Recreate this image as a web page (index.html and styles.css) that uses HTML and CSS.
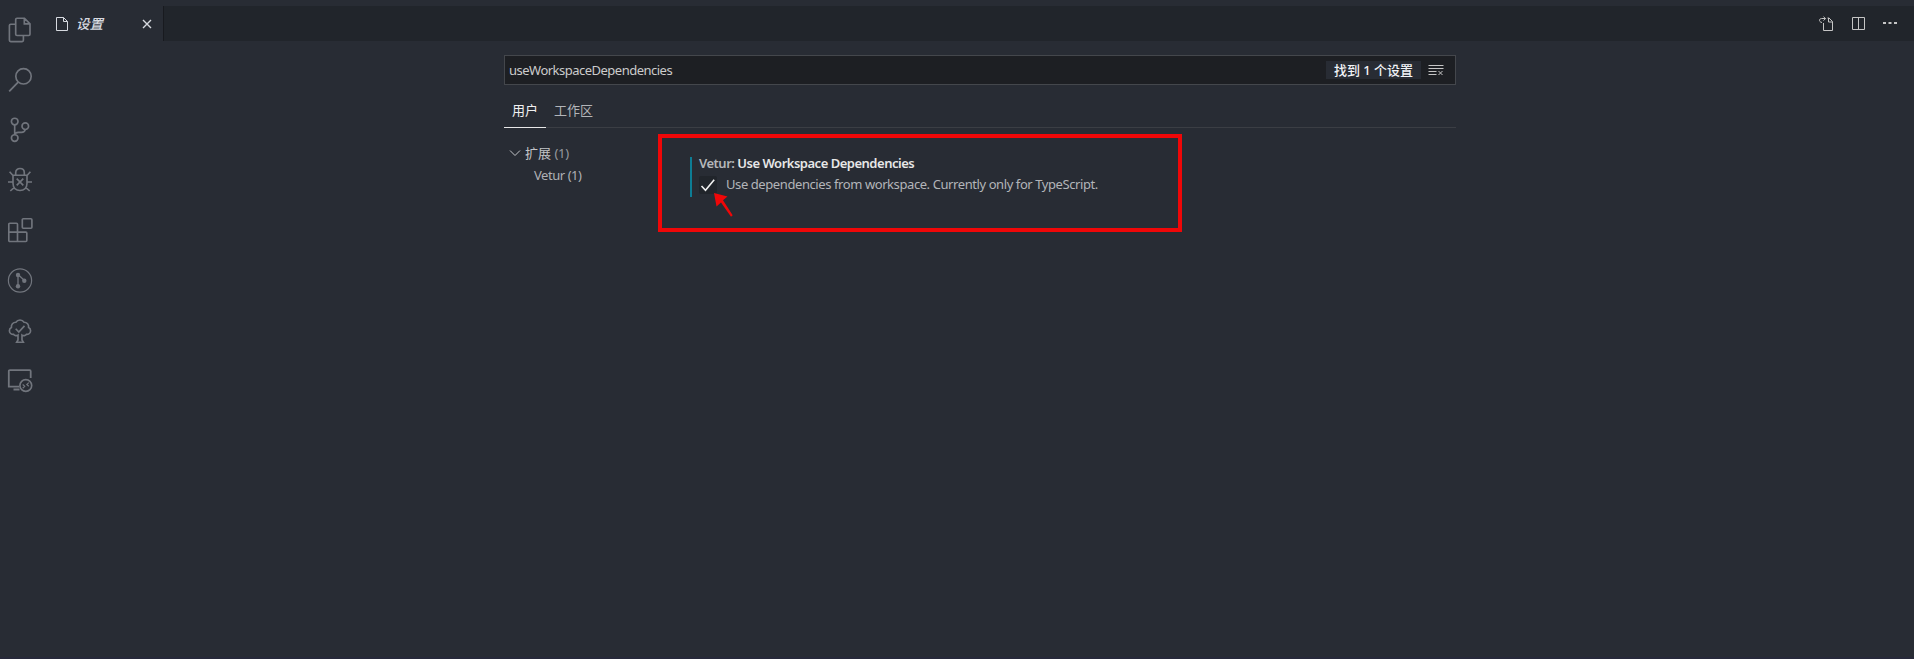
FILE: index.html
```html
<!DOCTYPE html>
<html lang="zh-CN">
<head>
<meta charset="utf-8">
<title>设置</title>
<link rel="stylesheet" href="styles.css">
</head>
<body>
<div class="workbench">
  <nav class="activity">
    <svg viewBox="0 0 26 26"><path d="M10 1.2h7.5L23 6.8v10.4a1.3 1.3 0 0 1-1.3 1.3H10a1.3 1.3 0 0 1-1.3-1.3V2.5A1.3 1.3 0 0 1 10 1.2zM17.3 1.5v5.3H23M8.5 7.2H3.7a1.3 1.3 0 0 0-1.3 1.3v14.8a1.3 1.3 0 0 0 1.3 1.3h11.4a1.3 1.3 0 0 0 1.3-1.3v-4.6"/></svg>
    <svg viewBox="0 0 26 26"><circle cx="16.5" cy="9.3" r="7.7"/><path d="M11.2 15.2 2.2 24.3" stroke-width="1.8"/></svg>
    <svg viewBox="0 0 26 26"><circle cx="7.7" cy="4.5" r="3.3"/><circle cx="7.7" cy="21" r="3.3"/><circle cx="18.3" cy="9.2" r="3.3"/><path d="M7.7 8v9.7M18.2 12.6c-.4 2-1.7 2.7-3.7 2.7h-3.3c-2 0-3.2.8-3.5 2.2"/></svg>
    <svg viewBox="0 0 26 26"><path d="M6 8.2h14v8.1c0 4.5-3 7.2-7 7.2s-7-2.7-7-7.2zM8.7 8V5.7C8.7 3.2 10.5 1.500 13 1.500s4.300 1.700 4.300 4.200V8M6 8.500 2.600 4.700M20 8.500l3.400-3.800M6 15H1M20 15h5M7.400 20.300 3.300 24M18.600 20.300l4.100 3.700M9.700 11.700l6.600 6.600M16.300 11.700l-6.600 6.600"/></svg>
    <svg viewBox="0 0 26 26"><rect x="15.300" y="1.700" width="9.600" height="9.500" rx="1"/><path d="M2.800 6.200h6.700a1 1 0 0 1 1 1v7.900h8.300a1 1 0 0 1 1 1v7.400a1 1 0 0 1-1 1h-16a1 1 0 0 1-1-1V7.200a1 1 0 0 1 1-1zM1.800 15.100h8.700v9.200"/></svg>
    <svg viewBox="0 0 26 26"><circle cx="13" cy="13.500" r="11.600" stroke-width="1.200"/><path d="M11 8v11M11 7.500l6.500 6" stroke-width="1.300"/><g class="solid"><circle cx="11" cy="8" r="2.200"/><circle cx="11" cy="19.300" r="2.200"/><circle cx="17.300" cy="13.700" r="2.200"/></g></svg>
    <svg viewBox="0 0 26 26"><path d="M11 17.100c-1.500 1-3.600.7-4.400-.7-2.400 0-4.200-1.600-4.200-3.700 0-1.500.8-2.700 2-3.300C4.100 6.400 5.900 4.200 9 4.200c1.700-3 6.300-3 8 0 3.100 0 4.900 2.200 4.600 5.200 1.200.6 2 1.800 2 3.300 0 2.100-1.800 3.700-4.200 3.700-.8 1.400-2.900 1.700-4.400.7v4.900l1.300 2.200H9.700l1.300-2.200zM8.700 10.800l3.100 3.300 5.700-6.200"/></svg>
    <svg viewBox="0 0 26 26"><path d="M23.700 10V3.200a1 1 0 0 0-1-1H2.800a1 1 0 0 0-1 1v15.400h10.500M6.500 21.500h6" stroke-width="1.800"/><circle cx="18.800" cy="17.500" r="5.900"/><path d="m15.700 16.500 2 1.800-2 1.900M21.800 14.600l-2 1.900 2 1.800" stroke-width="1.200"/></svg>
  </nav>
  <section class="editor">
    <header class="tabs">
      <div class="tab">
        <svg class="file" viewBox="0 0 14 16"><path d="M1.500 1.500h7l4 4v9h-11zM8.500 1.500v4h4"/></svg>
        <span class="name">设置</span>
        <svg class="close" viewBox="0 0 12 12"><path d="m2 2 8 8M10 2l-8 8"/></svg>
      </div>
      <div class="actions">
        <svg viewBox="0 0 16 16"><path d="M5.500 7v7.500h9V5.500l-3.500-3.500H9.500M10.500 2v4h4M4 6.500C.5 6 1 2.500 3.500 2.500h4M5.500.7l2 1.900-2 2"/></svg>
        <svg viewBox="0 0 16 16"><path d="M2.500 1.500h12v12h-12zM8.500 1.500v12"/></svg>
        <svg viewBox="0 0 16 16"><g class="solid"><rect x="1" y="6" width="3" height="2"/><rect x="6.500" y="6" width="3" height="2"/><rect x="12" y="6" width="3" height="2"/></g></svg>
      </div>
    </header>
    <main class="settings">
      <div class="search">
        <span class="query">useWorkspaceDependencies</span>
        <span class="count">找到 1 个设置</span>
        <svg class="clear" viewBox="0 0 16 14"><path d="M.5 2.500h15M.5 5.500h15M.5 8.500h8M.5 11.500h8M10.500 8l4 4M14.500 8l-4 4"/></svg>
      </div>
      <div class="scopes"><span class="scope active">用户</span><span class="scope">工作区</span></div>
      <div class="content">
        <aside class="toc">
          <div class="group"><svg viewBox="0 0 12 8"><path d="m1 1.500 5 5 5-5"/></svg><span>扩展 <i>(1)</i></span></div>
          <div class="entry">Vetur (1)</div>
        </aside>
        <div class="frame">
          <article class="item">
            <h2><span>Vetur: </span>Use Workspace Dependencies</h2>
            <div class="option">
              <span class="check"><svg viewBox="0 0 18 18"><path d="m2.500 10 4 4.200 8.700-10.500"/></svg></span>
              <span class="desc">Use dependencies from workspace. Currently only for TypeScript.</span>
            </div>
          </article>
          <svg class="arrow" viewBox="0 0 22 26"><path d="M1 1 14.500 4.500 10 8.200 19.700 23.300 18 24.700 8 10.500 3.500 14.500z"/></svg>
        </div>
      </div>
    </main>
  </section>
</div>
</body>
</html>
```
FILE: styles.css
```css
* { box-sizing: border-box; }
body {
  margin: 0;
  background: #282c34;
  color: #c3c5c8;
  font: 13px/18px "Noto Sans", "Noto Sans CJK SC", sans-serif;
}
svg { display: block; flex: none; fill: none; stroke: currentColor; }
.solid { fill: currentColor; stroke: none; }
.workbench { display: flex; height: 659px; border-bottom: 2px solid #27293a; }
.activity {
  width: 40px;
  padding: 17px 0 0 7px;
  display: flex;
  flex-direction: column;
  gap: 24.100px;
  color: #71757d;
}
.activity svg { width: 26px; height: 26px; stroke-width: 1.650; }
.editor { flex: 1; padding-top: 6px; }
.tabs { height: 35px; display: flex; justify-content: space-between; background: #21252b; }
.tab {
  width: 124px;
  padding-left: 15px;
  display: flex;
  align-items: center;
  background: #282c34;
  border-right: 1px solid #181a1f;
  color: #d7dae0;
}
.file { width: 14px; height: 16px; }
.name { margin-left: 7px; width: 59px; font-style: italic; font-weight: 500; font-size: 13.500px; }
.close { width: 12px; height: 12px; margin-left: 6px; stroke-width: 1.400; }
.actions { display: flex; align-items: center; gap: 16px; padding-right: 16px; color: #c5c5c5; }
.actions svg { width: 16px; height: 16px; }
.settings { width: 952px; margin: 14px 0 0 464px; }
.search {
  height: 30px;
  padding: 0 11px 0 4px;
  display: flex;
  align-items: center;
  background: #1d1f23;
  border: 1px solid #44474c;
  color: #ccc;
}
.query { flex: 1; letter-spacing: -0.510px; }
.count {
  width: 95px;
  height: 18px;
  line-height: 18px;
  text-align: center;
  background: #282c34;
  color: #f2f4f8;
  font-weight: 500;
}
.clear { width: 16px; height: 14px; margin-left: 7px; color: #c5c5c5; }
.scopes { height: 43px; padding-top: 15px; display: flex; border-bottom: 1px solid #3b3e44; }
.scope { height: 28px; padding: 1px 8px 0; color: #b3b5b9; }
.active { width: 42px; color: #f0f0f0; border-bottom: 1px solid #e7e7e7; }
.content { display: flex; }
.toc { width: 154px; padding-top: 15px; }
.group { display: flex; align-items: center; height: 20px; padding-left: 5px; }
.group svg { width: 12px; height: 8px; margin-right: 4px; }
.group i { font-style: normal; color: #979a9f; letter-spacing: -0.300px; }
.entry { padding-left: 30px; margin-top: 3px; color: #afb1b5; letter-spacing: -0.450px; }
.frame {
  position: relative;
  width: 524px;
  height: 98px;
  margin-top: 6px;
  padding: 19px 0 0 28px;
  border: 4px solid #f00708;
}
.item { height: 40px; padding-left: 7px; border-left: 2px solid #0d7d95; }
h2 {
  margin: 0;
  font-size: 13px;
  line-height: 12px;
  color: #e7e7e7;
  font-weight: 600;
  letter-spacing: -0.490px;
  white-space: pre;
}
h2 span { color: #b5b7ba; }
.option { display: flex; margin-top: 7px; }
.check { width: 18px; height: 18px; background: #21252b; border-radius: 2px; color: #f0f0f0; }
.check svg { width: 18px; height: 18px; stroke-width: 1.600; }
.desc { margin-left: 9px; line-height: 16px; color: #b3b5b9; letter-spacing: -0.415px; white-space: nowrap; }
.arrow { position: absolute; left: 51px; top: 54px; width: 22px; height: 26px; fill: #f00708; stroke: none; }
```
